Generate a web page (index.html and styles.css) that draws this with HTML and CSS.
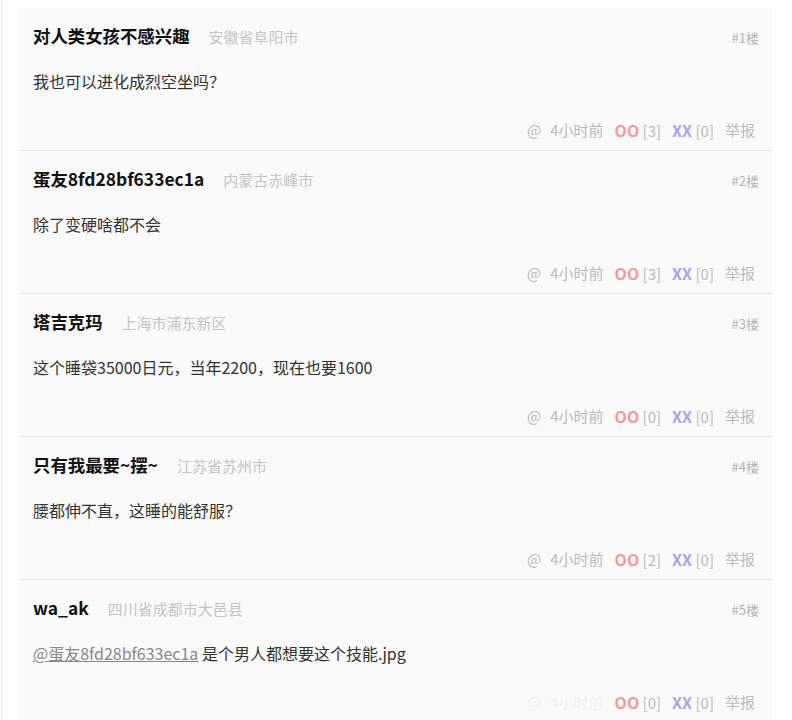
FILE: index.html
```html
<!DOCTYPE html>
<html lang="zh">
<head>
  <meta charset="UTF-8" />
  <meta name="viewport" content="width=device-width, initial-scale=1.0"/>
  <title>评论</title>
  <link rel="stylesheet" href="styles.css">
</head>
<body>
  <div class="comments">

    <div class="comment">
      <div class="comment-head">
        <span class="author">对人类女孩不感兴趣</span>
        <span class="place">安徽省阜阳市</span>
        <span class="floor">#1楼</span>
      </div>
      <p class="text">我也可以进化成烈空坐吗？</p>
      <div class="comment-foot">
        <span>@</span><span>4小时前</span>
        <span><b class="oo">OO</b> [3]</span>
        <span><b class="xx">XX</b> [0]</span>
        <span>举报</span>
      </div>
    </div>

    <div class="comment">
      <div class="comment-head">
        <span class="author">蛋友8fd28bf633ec1a</span>
        <span class="place">内蒙古赤峰市</span>
        <span class="floor">#2楼</span>
      </div>
      <p class="text">除了变硬啥都不会</p>
      <div class="comment-foot">
        <span>@</span><span>4小时前</span>
        <span><b class="oo">OO</b> [3]</span>
        <span><b class="xx">XX</b> [0]</span>
        <span>举报</span>
      </div>
    </div>

    <div class="comment">
      <div class="comment-head">
        <span class="author">塔吉克玛</span>
        <span class="place">上海市浦东新区</span>
        <span class="floor">#3楼</span>
      </div>
      <p class="text">这个睡袋35000日元，当年2200，现在也要1600</p>
      <div class="comment-foot">
        <span>@</span><span>4小时前</span>
        <span><b class="oo">OO</b> [0]</span>
        <span><b class="xx">XX</b> [0]</span>
        <span>举报</span>
      </div>
    </div>

    <div class="comment">
      <div class="comment-head">
        <span class="author">只有我最要~摆~</span>
        <span class="place">江苏省苏州市</span>
        <span class="floor">#4楼</span>
      </div>
      <p class="text">腰都伸不直，这睡的能舒服？</p>
      <div class="comment-foot">
        <span>@</span><span>4小时前</span>
        <span><b class="oo">OO</b> [2]</span>
        <span><b class="xx">XX</b> [0]</span>
        <span>举报</span>
      </div>
    </div>

    <div class="comment">
      <div class="comment-head">
        <span class="author">wa_ak</span>
        <span class="place">四川省成都市大邑县</span>
        <span class="floor">#5楼</span>
      </div>
      <p class="text"><a class="mention" href="#">@蛋友8fd28bf633ec1a</a> 是个男人都想要这个技能.jpg</p>
      <div class="comment-foot">
        <span class="faded">@</span><span class="faded">4小时前</span>
        <span><b class="oo">OO</b> [0]</span>
        <span><b class="xx">XX</b> [0]</span>
        <span>举报</span>
      </div>
    </div>

  </div>
</body>
</html>
```

FILE: styles.css
```css
body {
  margin: 0;
  background: #fff;
  font-family: "Noto Sans CJK SC", "Noto Sans", sans-serif;
  color: #333;
}
.comments {
  margin-left: 1px;
  border-left: 1px solid #e8e8e8;
  padding: 8px 20px 0 17px;
  min-height: 720px;
  box-sizing: border-box;
}
.comment {
  background: #fafafa;
  border-bottom: 1px solid #e4e4e4;
  padding: 16px 13px 7px 14px;
  height: 143px;
  box-sizing: border-box;
}
.comment-head {
  display: flex;
  align-items: baseline;
  height: 24px;
  line-height: 24px;
}
.author {
  font-size: 17.4px;
  font-weight: bold;
  color: #111;
}
.place {
  margin-left: 19px;
  font-size: 15px;
  color: #c4c4c4;
}
.floor {
  margin-left: auto;
  font-size: 13px;
  color: #b4b4b4;
}
.text {
  margin: 21px 0 0;
  font-size: 16px;
  line-height: 24px;
  color: #333;
}
.mention {
  color: #888;
}
.comment-foot {
  display: flex;
  justify-content: flex-end;
  gap: 11px;
  margin-top: 25px;
  padding-right: 4px;
  font-size: 15px;
  line-height: 24px;
  color: #bbb;
}
.comment-foot span:first-child {
  margin-right: -2px;
}
.oo {
  color: #f09a9a;
  font-size: 16px;
}
.xx {
  color: #a6a6ee;
  font-size: 16px;
}
.faded {
  color: #f1f1f1;
}
```
